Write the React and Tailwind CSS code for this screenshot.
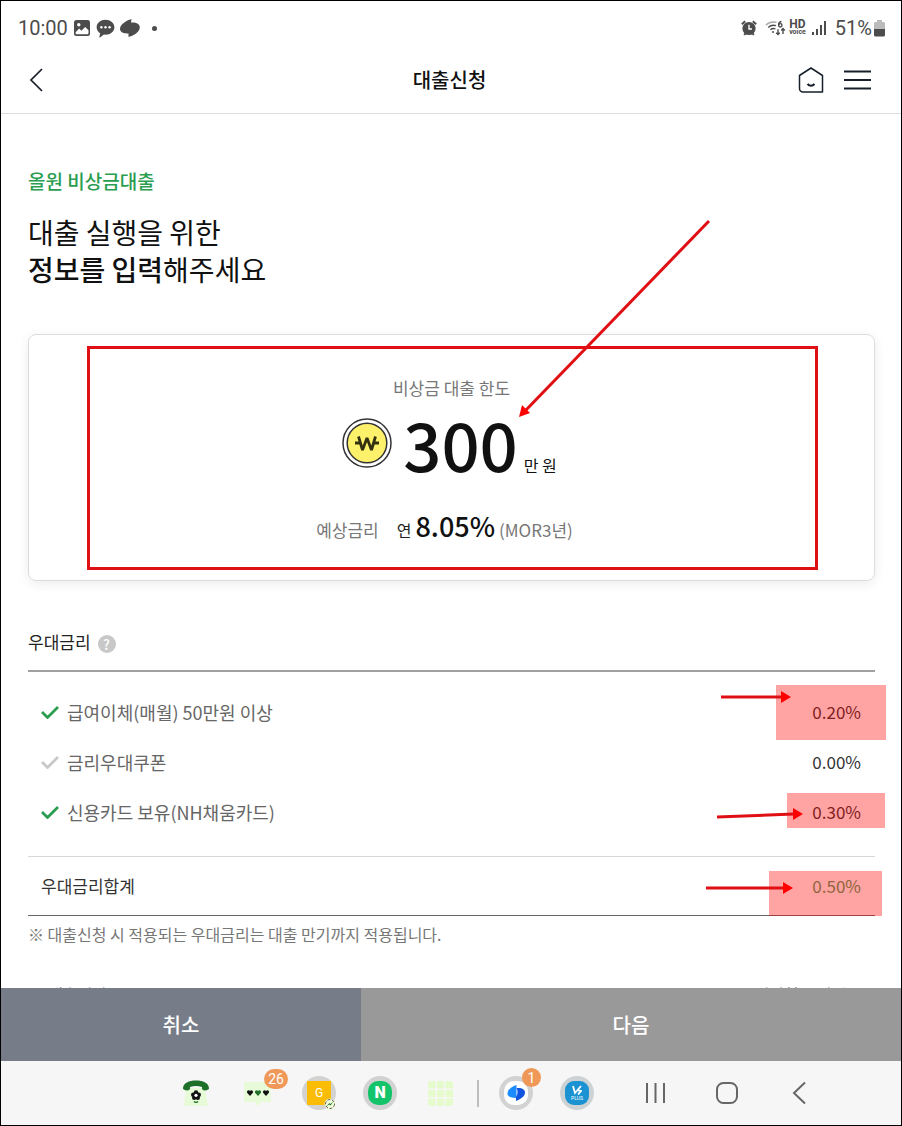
import React from 'react';

const rates = [
  { id: 'salary', label: '급여이체(매월) 50만원 이상', value: '0.20%', applied: true },
  { id: 'coupon', label: '금리우대쿠폰', value: '0.00%', applied: false },
  { id: 'card', label: '신용카드 보유(NH채움카드)', value: '0.30%', applied: true }
];

// Status bar
function StatusBar() {
  return (
    <div className="flex h-[54px] shrink-0 items-center justify-between pl-[17px] pr-4 font-['Roboto',sans-serif] text-xl text-[#4c4c4c]">
      <div className="flex items-center">
        <span className="mr-[6px]">10:00</span>
        <svg width="16" height="16" viewBox="0 0 16 16" className="mr-[6px]">
          <rect width="16" height="16" rx="2.5" fill="#4c4c4c" />
          <circle cx="4.8" cy="4.8" r="1.7" fill="#fff" />
          <path d="M1.6 12.2 5.2 8.6l2.2 2.2L11.2 7l3.3 3.2V13a1.2 1.2 0 0 1-1.2 1.2H2.8A1.2 1.2 0 0 1 1.6 13z" fill="#fff" />
        </svg>
        <svg width="19" height="19" viewBox="0 0 19 19" className="mr-[5px]">
          <path d="M9.5 0.8C4.6 0.8 0.6 4 0.6 8.2c0 2.6 1.5 4.8 3.6 6.1l-0.9 3.8c0 0.4 0.3 0.5 0.6 0.3l4-2.8 1.6 0.1c4.9 0 8.9-3.3 8.9-7.5S14.4 0.8 9.5 0.8z" fill="#4c4c4c" />
          <circle cx="5.4" cy="8.3" r="1.2" fill="#fff" />
          <circle cx="9.5" cy="8.3" r="1.2" fill="#fff" />
          <circle cx="13.6" cy="8.3" r="1.2" fill="#fff" />
        </svg>
        <svg width="20" height="18" viewBox="0 0 20 18">
          <path d="M11.5 0C6 1.5 0 5.5 0 10c0 3 3.5 4.6 8.5 4.6V18C12 17.4 19.8 13.5 19.8 8.5 19.8 5 16 3.2 11 3.7z" fill="#4c4c4c" />
        </svg>
        <span className="ml-3 size-[5px] rounded-full bg-[#4c4c4c]" />
      </div>
      <div className="flex items-center">
        <svg width="16" height="16" viewBox="0 0 16 16" className="mr-2">
          <path d="M0.8 4.2 4.2 1.2M15.2 4.2 11.8 1.2M3.2 15l1.6-2M12.8 15l-1.6-2" stroke="#4c4c4c" strokeWidth="2" />
          <circle cx="8" cy="8.5" r="6.6" fill="#4c4c4c" />
          <path d="M8 4.8v4.2h3" fill="none" stroke="#fff" strokeWidth="1.4" />
        </svg>
        <svg width="21" height="18" viewBox="0 0 21 18" className="mr-[3px]" fill="none" stroke="#4c4c4c" strokeWidth="1.4">
          <path d="M1 6C3.6 3.4 7.5 2.4 11.5 3.3" stroke="#aaa" />
          <path d="M3.2 8.4c2.2-2 5-2.6 7.8-1.8M5.4 10.8c1.4-1.2 3.3-1.6 5-1" />
          <circle cx="8" cy="13" r="1" fill="#4c4c4c" stroke="none" />
          <path d="M16.5 2.5c-2 0.3-2.9 1.8-2.9 3.4M13 15.5v-5.2M11.2 13.8 13 15.6l1.8-1.8M18 15v-5.2M16.2 11.4 18 9.6l1.8 1.8" />
          <circle cx="15.3" cy="6.3" r="1.7" />
        </svg>
        <span className="mr-[6px] flex flex-col items-center font-bold">
          <span className="text-[12px] leading-[9px]">HD</span>
          <span className="text-[7px] leading-[7px]">voice</span>
        </span>
        <svg width="16" height="16" viewBox="0 0 16 16" className="mr-[7px]" fill="#4c4c4c">
          <rect x="0" y="12" width="2" height="3" />
          <rect x="4" y="9" width="2" height="6" />
          <rect x="8" y="5" width="2" height="10" />
          <rect x="12" y="1" width="2" height="14" />
        </svg>
        <span className="mr-[2px]">51%</span>
        <svg width="11" height="17" viewBox="0 0 11 17">
          <path d="M3 0h5v2h1.5A1.5 1.5 0 0 1 11 3.5V9H0V3.5A1.5 1.5 0 0 1 1.5 2H3z" fill="#bbb" />
          <path d="M0 9h11v6a1.5 1.5 0 0 1-1.5 1.5h-8A1.5 1.5 0 0 1 0 15z" fill="#4c4c4c" />
        </svg>
      </div>
    </div>
  );
}

function Header() {
  return (
    <header className="grid h-[59px] shrink-0 grid-cols-[1fr_auto_1fr] items-center border-b border-[#dcdcdc] pb-2 pl-[26px] pr-[29px]">
      <button type="button" aria-label="뒤로" className="justify-self-start">
        <svg width="18" height="26" viewBox="0 0 18 26" fill="none" stroke="#17202a" strokeWidth="1.7">
          <path d="M15 2 4 13l11 11" />
        </svg>
      </button>
      <h1 className="text-xl font-medium text-[#111]">대출신청</h1>
      <div className="flex items-center gap-5 justify-self-end">
        <button type="button" aria-label="홈">
          <svg width="26" height="28" viewBox="0 0 26 28" fill="none" stroke="#17202a" strokeWidth="1.5">
            <path d="M13 2 24.5 9.5V26H5a3.5 3.5 0 0 1-3.5-3.5v-13z" strokeLinejoin="round" />
            <path d="M9.5 18c2 2.2 5 2.2 7 0" strokeWidth="2" />
          </svg>
        </button>
        <button type="button" aria-label="메뉴">
          <svg width="28" height="20" viewBox="0 0 28 20" stroke="#17202a" strokeWidth="2">
            <path d="M0 1.5h27M0 10h27M0 18.5h27" />
          </svg>
        </button>
      </div>
    </header>
  );
}

function WonCoin() {
  return (
    <svg width="50" height="50" viewBox="0 0 50 50" fill="none">
      <circle cx="25" cy="25" r="24" fill="#fff" stroke="#333" strokeWidth="1.5" />
      <circle cx="25" cy="25" r="19.8" fill="#fdf06a" stroke="#333" strokeWidth="1.5" />
      <g stroke="#333010" strokeWidth="2.8" strokeLinejoin="bevel">
        <path d="M16.5 18.5 20.5 32 25 20l4.5 12 4-13.5" />
        <path d="M13 25h5M32 25h5" />
      </g>
    </svg>
  );
}

function LimitCard() {
  return (
    <section className="relative mt-[46px] flex h-[247px] flex-col items-center rounded-lg border border-[#dcdcdc] shadow-[0_3px_12px_rgba(0,0,0,0.08)]">
      <p className="mt-[41px] text-[17px] leading-6 text-[#777]">비상금 대출 한도</p>
      <div className="mt-[2px] flex items-start pr-1">
        <span className="mr-[11px] mt-4"><WonCoin /></span>
        <p className="flex items-baseline text-[#111]">
          <strong className="text-[67px] font-medium leading-[82px]">300</strong>
          <span className="ml-[6px] text-base">만 원</span>
        </p>
      </div>
      <p className="mt-[22px] flex items-baseline pr-[14px] text-[17px] leading-10 text-[#777]">
        예상금리
        <span className="ml-[18px] text-base text-[#222]">연</span>
        <strong className="mx-1 text-[27px] font-medium text-[#111]">8.05%</strong>
        (MOR3년)
      </p>

      {/* Limit highlight */}
      <div className="absolute bottom-[10px] left-[58px] right-[56px] top-[11px] border-[3px] border-[#e00f14]" />
      <svg width="194" height="200" viewBox="0 0 194 200" className="absolute -top-[115px] left-1/2 ml-[66px]">
        <path d="M191 1 8 190" stroke="#e00f14" strokeWidth="3" />
        <path d="m1 197 3-12 8 8z" fill="#f00" />
      </svg>
    </section>
  );
}

function Check({ applied }) {
  return (
    <svg width="18" height="13" viewBox="0 0 18 13" fill="none" stroke={applied ? '#2a9d50' : '#c8c8c8'} strokeWidth="2.8">
      <path d="m1 6 5.5 5.5L17 1" />
    </svg>
  );
}

function Arrow({ className, width, tilt = 0 }) {
  return (
    <svg width={width} height="14" viewBox={`0 0 ${width} 14`} className={className}>
      <path d={`M0 ${7 + tilt}L${width - 9} 7`} stroke="#e00f14" strokeWidth="3" />
      <path d={`M${width - 10} 1 ${width} 7l-10 6z`} fill="#f00" />
    </svg>
  );
}

// Marker drawn over each rate that counts
function Marker({ id }) {
  if (id === 'salary') {
    return (
      <>
        <div className="absolute -right-[11px] -top-[2px] h-[55px] w-[110px] bg-[#ff0000]/36" />
        <Arrow className="absolute right-[84px] top-[3px]" width={70} />
      </>
    );
  }
  if (id === 'card') {
    return (
      <>
        <div className="absolute -right-[10px] top-[6px] h-[35px] w-[98px] bg-[#ff0000]/36" />
        <Arrow className="absolute right-[72px] top-5" width={86} tilt={3} />
      </>
    );
  }
  return null;
}

function PreferentialRates() {
  return (
    <section className="mt-[47px]">
      <h3 className="flex items-center gap-[7px] text-[17px] leading-7 text-[#222]">
        우대금리
        <button type="button" aria-label="도움말" className="mt-1 flex size-[18px] items-center justify-center rounded-full bg-[#c8c8c8] text-sm font-medium leading-none text-white">
          ?
        </button>
      </h3>
      <ul className="mt-[14px] border-t-2 border-[#a0a0a0] pb-[19px] pt-[15px]">
        {rates.map((rate) => (
          <li key={rate.id} className="relative flex h-[50px] items-center pl-[13px] pr-[14px]">
            <Check applied={rate.applied} />
            <span className="ml-2 text-lg text-[#666]">{rate.label}</span>
            <span className="ml-auto text-[17px] text-[#333]">{rate.value}</span>
            <Marker id={rate.id} />
          </li>
        ))}
      </ul>
      <div className="relative flex h-[60px] items-center border-b border-t border-b-[#666] border-t-[#d8d8d8] pl-[13px] pr-[14px] text-[17px]">
        <span className="text-[#333]">우대금리합계</span>
        <span className="ml-auto text-[#4c9f5f]">0.50%</span>
        <div className="absolute -right-[7px] top-[14px] h-[45px] w-[113px] bg-[#ff0000]/36" />
        <Arrow className="absolute right-[82px] top-6" width={87} />
      </div>
      <p className="mt-[6px] text-base leading-6 text-[#777]">
        ※ 대출신청 시 적용되는 우대금리는 대출 만기까지 적용됩니다.
      </p>
    </section>
  );
}

function BottomNav() {
  return (
    <nav className="flex h-16 shrink-0 items-center bg-[#f6f6f6] pl-[181px] font-['Roboto',sans-serif]">
      <button type="button" aria-label="전화" className="mr-[33px]">
        <svg width="28" height="28" viewBox="0 0 28 28">
          <path d="M4 9h19l3 18H2z" fill="#e8fbd8" />
          <path d="M1 9.5C1 4 7 1.5 14 1.5S27 4 27 9.5c0 2-7 3-7 0V8c-4-1.2-8-1.2-12 0v1.5c0 3-7 2-7 0z" fill="#1d7028" />
          <g fill="#111">
            <circle cx="14" cy="13.5" r="2.2" />
            <circle cx="11.2" cy="15.7" r="2.2" />
            <circle cx="16.8" cy="15.7" r="2.2" />
            <circle cx="12.2" cy="18.7" r="2.2" />
            <circle cx="15.8" cy="18.7" r="2.2" />
          </g>
          <circle cx="14" cy="16.3" r="1.6" fill="#fff" />
          <path d="M12 22.5c1 1 3 1 4 0" stroke="#1d7028" fill="none" strokeWidth="1.4" />
        </svg>
      </button>
      <button type="button" aria-label="메시지" className="relative mr-[30px]">
        <svg width="29" height="28" viewBox="0 0 29 28">
          <path d="M1 3h27v20H18l-3 4-3-4H1z" fill="#e8fbd8" />
          <path d="M7 17 4.3 14c-1.4-2 1.4-4 2.7-2 1.3-2 4.1 0 2.7 2z" fill="#111" />
          <path d="M15 17l-2.7-3c-1.4-2 1.4-4 2.7-2 1.3-2 4.1 0 2.7 2z" fill="#1d7028" />
          <path d="M23 17l-2.7-3c-1.4-2 1.4-4 2.7-2 1.3-2 4.1 0 2.7 2z" fill="#111" />
        </svg>
        <span className="absolute -top-[10px] left-[21px] flex h-5 w-6 items-center justify-center rounded-full bg-[#f09858] text-sm text-white">26</span>
      </button>
      <button type="button" aria-label="갤러리" className="relative mr-[27px] flex size-[34px] items-center justify-center rounded-full bg-[#d2d2d0]">
        <span className="flex size-6 items-center justify-center bg-[#fbbc05] text-xs text-white">G</span>
        <svg width="12" height="12" viewBox="0 0 12 12" className="absolute bottom-0 right-0">
          <circle cx="6" cy="6" r="5.5" fill="#f3ffdc" />
          <circle cx="6" cy="6" r="4.5" fill="none" stroke="#333" strokeDasharray="3 1.5" strokeWidth="0.8" />
          <path d="m2.5 8 3-3 1 1 3-2.5-3 4-1-1z" fill="#1d7028" />
        </svg>
      </button>
      <button type="button" aria-label="네이버" className="mr-[31px] flex size-[34px] items-center justify-center rounded-full bg-[#d2d2d2]">
        <span className="flex size-6 items-center justify-center rounded-[10px] bg-[#14c46a] text-base font-black leading-none text-white">N</span>
      </button>
      <button type="button" aria-label="앱 목록" className="mr-6">
        <svg width="25" height="25" viewBox="0 0 25 25">
          <rect width="25" height="25" rx="3" fill="#e6fbcc" />
          <path d="M8.3 0v25M16.7 0v25M0 8.3h25M0 16.7h25" stroke="#f6f6f6" strokeWidth="1.5" />
        </svg>
      </button>
      <span className="mr-5 h-[27px] w-[2px] bg-[#bdbdbd]" />
      <button type="button" aria-label="토스" className="relative mr-[27px] flex size-[34px] items-center justify-center rounded-full bg-[#d2d2d2]">
        <svg width="24" height="24" viewBox="0 0 24 24">
          <rect width="24" height="24" rx="10" fill="#fff" />
          <path d="M12.5 4C8 5.5 3.5 8.5 3.5 12.5c0 3 3 4.5 9 4.5z" fill="#1a8cff" />
          <path d="M12.5 7c5.5-0.5 8.5 1.5 8.5 4.5 0 4-4.5 6.8-9 8.5v-4c2-3 2-6 0.5-9z" fill="#1054e0" />
        </svg>
        <span className="absolute -top-2 left-[23px] flex size-[19px] items-center justify-center rounded-full bg-[#f09858] text-sm text-white">1</span>
      </button>
      <button type="button" aria-label="K PLUS" className="mr-[51px] flex size-[34px] items-center justify-center rounded-full bg-[#cdd2d4]">
        <span className="flex size-6 flex-col items-center justify-center rounded-[9px] bg-[#1b93d2] text-white">
          <svg width="10" height="10" viewBox="0 0 10 10" fill="none" stroke="#fff" strokeWidth="1.8">
            <path d="m1 1 2 7 6-7M5 5l4 1-3 3.5" />
          </svg>
          <span className="text-[5px] leading-[6px]">PLUS</span>
        </span>
      </button>
      <div className="flex items-center text-[#666]">
        <button type="button" aria-label="최근 앱" className="mr-[50px]">
          <svg width="21" height="22" viewBox="0 0 21 22" stroke="currentColor" strokeWidth="2">
            <path d="M2 1v20M10.5 1v20M19 1v20" />
          </svg>
        </button>
        <button type="button" aria-label="홈 화면" className="mr-[54px]">
          <svg width="22" height="22" viewBox="0 0 22 22" fill="none" stroke="currentColor" strokeWidth="2">
            <rect x="1" y="1" width="20" height="20" rx="6.5" />
          </svg>
        </button>
        <button type="button" aria-label="이전 화면">
          <svg width="14" height="24" viewBox="0 0 14 24" fill="none" stroke="currentColor" strokeWidth="2">
            <path d="M13 1.5 2 12l11 10.5" />
          </svg>
        </button>
      </div>
    </nav>
  );
}

export default function App() {
  return (
    <div className="flex h-screen flex-col border border-black bg-white font-['Noto_Sans_CJK_KR',sans-serif]">
      <StatusBar />
      <Header />
      <main className="min-h-0 flex-1 overflow-hidden pl-[27px] pr-[26px] pt-[53px]">
        <p className="text-[19px] font-medium leading-7 text-[#2a9d50]">올원 비상금대출</p>
        <h2 className="mt-[19px] text-[28px] leading-[37px] text-[#111]">
          대출 실행을 위한
          <br />
          <strong className="font-medium">정보를 입력</strong>해주세요
        </h2>
        <LimitCard />
        <PreferentialRates />
        <div className="mt-[36px] flex justify-between pl-5 pr-[14px] text-base leading-6 text-[#666]">
          <span>대출기간</span>
          <span>고객신청 금리적용</span>
        </div>
      </main>
      <div className="grid h-[73px] shrink-0 grid-cols-[2fr_3fr] text-xl font-medium text-white">
        <button type="button" className="bg-[#777d88]">취소</button>
        <button type="button" className="bg-[#999]">다음</button>
      </div>
      <BottomNav />
    </div>
  );
}
